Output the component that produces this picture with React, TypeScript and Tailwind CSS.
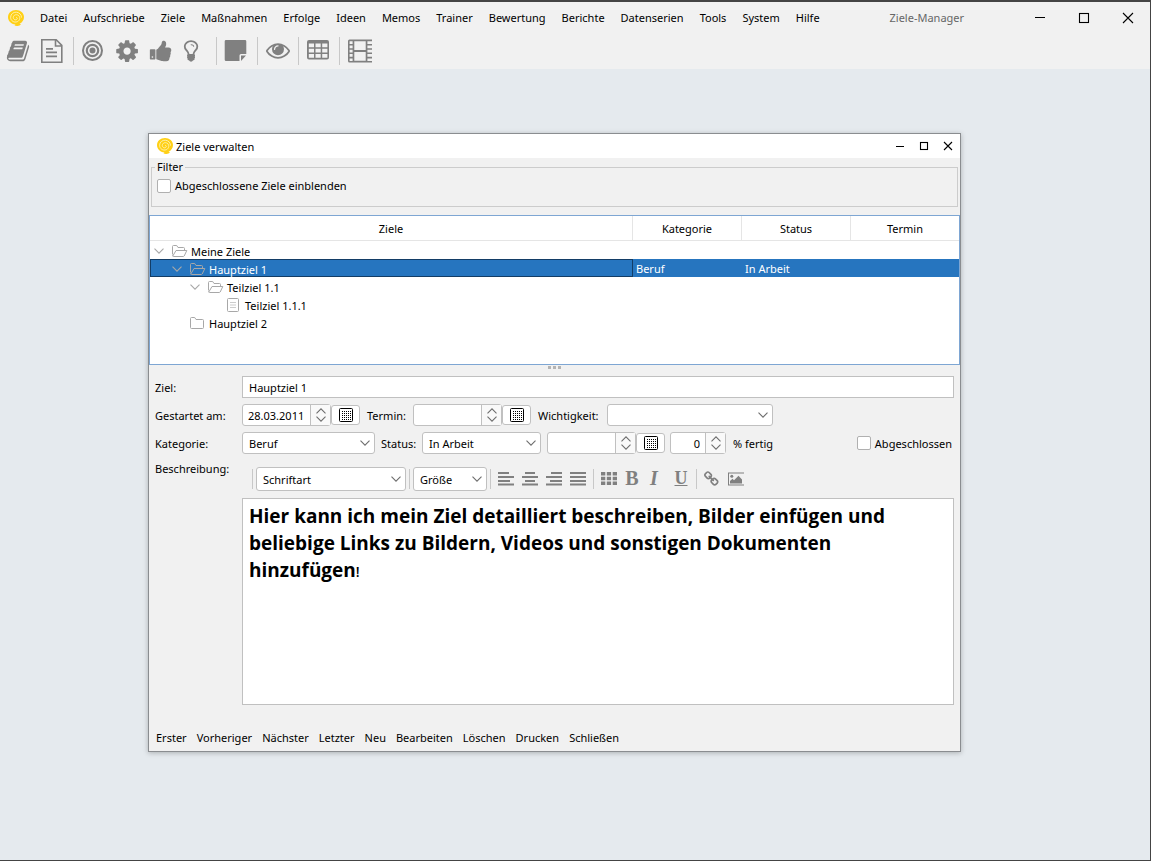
import { useState } from 'react';
import type { ReactNode } from 'react';
import { clsx } from 'clsx';

const menus = ['Datei', 'Aufschriebe', 'Ziele', 'Maßnahmen', 'Erfolge', 'Ideen', 'Memos', 'Trainer', 'Bewertung', 'Berichte', 'Datenserien', 'Tools', 'System', 'Hilfe'];
const actions = ['Erster', 'Vorheriger', 'Nächster', 'Letzter', 'Neu', 'Bearbeiten', 'Löschen', 'Drucken', 'Schließen'];

const goals = [
    { id: 1, name: 'Meine Ziele', indent: 'pl-[3px]', icon: 'open', expandable: true, category: '', status: '' },
    { id: 2, name: 'Hauptziel 1', indent: 'pl-[21px]', icon: 'open', expandable: true, category: 'Beruf', status: 'In Arbeit' },
    { id: 3, name: 'Teilziel 1.1', indent: 'pl-[39px]', icon: 'open', expandable: true, category: '', status: '' },
    { id: 4, name: 'Teilziel 1.1.1', indent: 'pl-[57px]', icon: 'leaf', expandable: false, category: '', status: '' },
    { id: 5, name: 'Hauptziel 2', indent: 'pl-[21px]', icon: 'closed', expandable: false, category: '', status: '' },
];

const Logo = () => (
    <svg viewBox="0 0 16 16" className="size-4">
        <path d="M8 0c4.500 0 8 3 8 7 0 3-1.800 5.600-4.500 6.800l1.500.4-1.500 1.300c-1.500.8-4 .6-5-.2l1-.8C3 14 0 11 0 7.300 0 3 3.500 0 8 0z" fill="#ffd016" />
        <path d="M8 7.800c.8-.8 1.800.3 1 1.300C7.800 10.600 5.300 9.600 5.300 7.500c0-2.400 2.800-3.600 4.800-2.300 2.600 1.600 2 5.300-.8 6.500-3.200 1.300-6.700-.9-6.700-4.400C2.600 4 5.500 2 8.300 2.200c3 .2 5.200 2.500 5.200 5.400" fill="none" stroke="#fff3b8" strokeWidth=".9" />
    </svg>
);

const Glyph = ({ children, viewBox = '0 0 24 24' }: { children: ReactNode; viewBox?: string }) => (
    <svg viewBox={viewBox} className="size-6 fill-[#808080]">{children}</svg>
);

const BookIcon = () => (
    <Glyph viewBox="0 0 1792 1792">
        <path d="M1703 478q40 57 18 129l-275 906q-19 64-76.500 107.500t-122.500 43.500h-923q-77 0-148.500-53.500t-99.500-131.500q-24-67-2-127 0-4 3-27t4-37q1-8-3-21.500t-3-19.500q2-11 8-21t16.500-23.500 16.500-23.500q23-38 45-91.500t30-91.500q3-10 .5-30t-.5-28q3-11 17-28t17-23q21-36 42-92t25-90q1-9-2.500-32t.5-28q4-13 22-30.500t22-22.500q19-26 42.500-84.500t27.500-96.500q1-8-3-25.500t-2-26.500q2-8 9-18t18-23 17-21q8-12 16.500-30.500t15-35 16-36 19.500-32 26.500-23.500 36-11.500 47.500 5.500l-1 3q38-9 51-9h761q74 0 114 56t18 130l-274 906q-36 119-71.500 153.500t-128.500 34.500h-869q-27 0-38 15-11 16-1 43 24 70 144 70h923q29 0 56-15.500t35-41.500l300-987q7-22 5-57 38 15 59 43zm-1064 2q-4 13 2 22.500t20 9.500h608q13 0 25.500-9.500t16.500-22.500l21-64q4-13-2-22.500t-20-9.500h-608q-13 0-25.500 9.500t-16.500 22.500zm-83 256q-4 13 2 22.500t20 9.500h608q13 0 25.500-9.500t16.500-22.500l21-64q4-13-2-22.500t-20-9.500h-608q-13 0-25.500 9.500t-16.500 22.500z" />
    </Glyph>
);

const NoteTextIcon = () => (
    <Glyph>
        <path d="M1.800.8h14.400l5.600 5.600v16.800h-20zM15.500 1v6h6" fill="none" stroke="#808080" strokeWidth="1.600" />
        <path d="M6 9h7v1.800H6zM6 12.500h11v1.800H6zM6 16.500h11v1.800H6z" />
    </Glyph>
);

const TargetIcon = () => (
    <Glyph>
        <circle cx="11.500" cy="11.500" r="9.500" fill="none" stroke="#808080" strokeWidth="2" />
        <circle cx="11.500" cy="11.500" r="5.700" fill="none" stroke="#808080" strokeWidth="2.200" />
        <circle cx="11.500" cy="11.500" r="3" />
    </Glyph>
);

const CogIcon = () => (
    <Glyph viewBox="40 40 1700 1700">
        <path d="M1152 896q0-106-75-181t-181-75-181 75-75 181 75 181 181 75 181-75 75-181zm512-109v222q0 12-8 23t-20 13l-185 28q-19 54-39 91 35 50 107 138 10 12 10 25t-9 23q-27 37-99 108t-94 71q-12 0-26-9l-138-108q-44 23-91 38-16 136-29 186-7 28-36 28h-222q-14 0-24.500-8.500t-11.500-21.500l-28-184q-49-16-90-37l-141 107q-10 9-25 9-14 0-25-11-126-114-165-168-7-10-7-23 0-12 8-23 15-21 51-66.500t54-70.500q-27-50-41-99l-183-27q-13-2-21-12.500t-8-23.500v-222q0-12 8-23t19-13l186-28q14-46 39-92-40-57-107-138-10-12-10-24 0-10 9-23 26-36 98.500-107.500t94.500-71.500q13 0 26 10l138 107q44-23 91-38 16-136 29-186 7-28 36-28h222q14 0 24.500 8.500t11.500 21.500l28 184q49 16 90 37l142-107q9-9 24-9 13 0 25 10 129 119 165 170 7 8 7 22 0 12-8 23-15 21-51 66.500t-54 70.500q26 50 41 98l183 28q13 2 21 12.500t8 23.500z" />
    </Glyph>
);

const ThumbIcon = () => (
    <Glyph viewBox="0 0 1792 1792">
        <path d="M320 1344q0-26-19-45t-45-19q-27 0-45.500 19t-18.500 45q0 27 18.500 45.500t45.500 18.500q26 0 45-18.500t19-45.500zm160-512v640q0 26-19 45t-45 19h-288q-26 0-45-19t-19-45v-640q0-26 19-45t45-19h288q26 0 45 19t19 45zm1184 0q0 86-55 149 15 44 15 76 3 76-43 137 17 56 0 117-15 57-54 94 9 112-49 181-64 76-197 78h-129q-66 0-144-15.500t-121.500-29-120.500-39.500q-123-43-158-44-26-1-45-19.500t-19-44.500v-641q0-25 18-43.500t43-20.500q24-2 76-59t101-121q68-87 101-120 18-18 31-48t17.500-48.500 13.500-60.500q7-39 12.500-61t19.500-52 34-50q19-19 45-19 46 0 82.500 10.500t60 26 40 40.500 24 45 12 50 5 45 .5 39q0 38-9.500 76t-19 60-27.500 56q-3 6-10 18t-11 22-8 24h277q78 0 135 57t57 135z" />
    </Glyph>
);

const BulbIcon = () => (
    <Glyph viewBox="320 40 1720 1720">
        <path d="M1120 576q0 13-9.500 22.500t-22.500 9.500-22.500-9.500-9.500-22.500q0-46-54-71t-106-25q-13 0-22.500-9.500t-9.500-22.500 9.500-22.500 22.500-9.500q50 0 99.500 16t87 54 37.500 90zm160 0q0-72-34.500-134t-90-101.500-123-62-136.500-22.500-136.500 22.500-123 62-90 101.500-34.500 134q0 101 68 180 10 11 30.500 33t30.500 33q128 153 141 298h228q13-145 141-298 10-11 30.500-33t30.500-33q68-79 68-180zm128 0q0 155-103 268-45 49-74.500 87t-59.500 95.500-34 107.500q47 28 47 82 0 37-25 64 25 27 25 64 0 52-45 81 13 23 13 47 0 46-31.500 71t-77.500 25q-20 44-60 70t-87 26-87-26-60-70q-46 0-77.500-25t-31.500-71q0-24 13-47-45-29-45-81 0-37 25-64-25-27-25-64 0-54 47-82-4-50-34-107.500t-59.500-95.500-74.500-87q-103-113-103-268 0-99 44.500-184.500t117-142 164-89 186.500-32.500 186.500 32.500 164 89 117 142 44.500 184.500z" />
    </Glyph>
);

const StickyIcon = () => (
    <Glyph>
        <path d="M2 1h19a1.300 1.300 0 0 1 1.300 1.300V15H17a1.500 1.500 0 0 0-1.500 1.500V22H2a1.300 1.300 0 0 1-1.300-1.300V2.300A1.300 1.300 0 0 1 2 1zM17 16.500h5L17 22z" />
    </Glyph>
);

const EyeIcon = () => (
    <Glyph viewBox="0 64 1792 1792">
        <path d="M1664 960q-152-236-381-353 61 104 61 225 0 185-131.500 316.500t-316.500 131.500-316.500-131.500-131.500-316.500q0-121 61-225-229 117-381 353 133 205 333.500 326.500t434.500 121.500 434.500-121.500 333.500-326.500zm-720-384q0-20-14-34t-34-14q-125 0-214.500 89.500t-89.500 214.500q0 20 14 34t34 14 34-14 14-34q0-86 61-147t147-61q20 0 34-14t14-34zm848 384q0 34-20 69-140 230-376.500 368.500t-499.500 138.500-499.500-139-376.500-368q-20-35-20-69t20-69q140-229 376.500-368t499.500-139 499.500 139 376.500 368q20 35 20 69z" />
    </Glyph>
);

const TableIcon = () => (
    <Glyph>
        <path fillRule="evenodd" d="M2 1h18a2 2 0 0 1 2 2v15.500a2 2 0 0 1-2 2H2a2 2 0 0 1-2-2V3a2 2 0 0 1 2-2zM1.800 4.500v3.700h5.200V4.500zM8.500 4.500v3.700h5.200V4.500zM15.200 4.500v3.700h5.200V4.500zM1.800 9.800v3.700h5.200V9.800zM8.500 9.800v3.700h5.200V9.800zM15.200 9.800v3.700h5.200V9.800zM1.800 15.100v3.700h5.200v-3.700zM8.500 15.100v3.700h5.200v-3.700zM15.200 15.100v3.700h5.200v-3.700z" />
    </Glyph>
);

const FilmIcon = () => (
    <Glyph>
        <path fillRule="evenodd" d="M1.500.5H24v23H1.500A1.500 1.500 0 0 1 0 22V2A1.500 1.500 0 0 1 1.500.5zM6.300 2.200v8.800h11.400V2.200zM6.300 12.900v8.800h11.400v-8.800zM1.600 2.200v2.700h3V2.200zM1.600 6.500v2.700h3V6.500zM1.600 10.800v2.700h3v-2.700zM1.600 15.100v2.700h3v-2.700zM1.600 19.400V22h3v-2.600zM19.400 2.200v2.700H24V2.200zM19.400 6.500v2.700H24V6.500zM19.400 10.800v2.700H24v-2.700zM19.400 15.100v2.700H24v-2.700zM19.400 19.400V22H24v-2.600z" />
    </Glyph>
);

const toolGroups = [
    { pad: 'pl-1.5 pr-[9px]', tools: [{ label: 'Aufschriebe', icon: BookIcon }, { label: 'Notizen', icon: NoteTextIcon }] },
    { pad: 'border-l pl-[7px] pr-[9px]', tools: [{ label: 'Ziele', icon: TargetIcon }, { label: 'Maßnahmen', icon: CogIcon }, { label: 'Erfolge', icon: ThumbIcon }, { label: 'Ideen', icon: BulbIcon }] },
    { pad: 'border-l pl-[7px] pr-[9px]', tools: [{ label: 'Memos', icon: StickyIcon }] },
    { pad: 'border-l px-2', tools: [{ label: 'Ansicht', icon: EyeIcon }] },
    { pad: 'border-l px-2', tools: [{ label: 'Tabelle', icon: TableIcon }] },
    { pad: 'border-l px-2', tools: [{ label: 'Filme', icon: FilmIcon }] },
];

const Chevron = ({ className }: { className?: string }) => (
    <svg viewBox="0 0 10 6" className={clsx('h-1.5 w-2.5', className)}>
        <path d="M.5.700 5 5.200 9.500.700" fill="none" stroke="currentColor" strokeWidth="1.100" />
    </svg>
);

const NodeIcon = ({ kind }: { kind: string }) => (
    <svg viewBox="0 0 16 14" className="h-3.5 w-4 shrink-0" fill="none" stroke="#a8a8a8">
        {kind === 'open' && <path d="M.5 10.500v-8q0-1 1-1h3.200l1.300 2h5.500q1 0 1 1v1.500M.8 12 4 6.500h10.800l-2.600 5.500q-.3.500-1 .5H1.500q-1 0-1-1" />}
        {kind === 'closed' && <path d="M.5 11.500v-9q0-1 1-1h3.200l1.300 2h6.500q1 0 1 1v7q0 1-1 1h-11q-1 0-1-1z" />}
        {kind === 'leaf' && (
            <>
                <rect x="1.500" y=".5" width="11" height="13" rx="1" />
                <path d="M4 4.500h6M4 7h6M4 9.500h6" stroke="#cccccc" />
            </>
        )}
    </svg>
);

const WindowButtons = ({ small }: { small?: boolean }) => (
    <div className={clsx('flex items-center', small ? 'gap-3 pr-1.5' : 'gap-8 pr-4')}>
        <button aria-label="Minimieren">
            <svg viewBox="0 0 12 12" className="size-3"><path d={small ? 'M2 6.500h8' : 'M1 5.500h10'} stroke="#000" /></svg>
        </button>
        <button aria-label="Maximieren">
            <svg viewBox="0 0 12 12" className="size-3">
                <rect x={small ? 2.5 : 1.5} y={small ? 2.5 : 1.5} width={small ? 7 : 9} height={small ? 7 : 9} fill="none" stroke="#000" strokeWidth="1.100" />
            </svg>
        </button>
        <button aria-label="Schließen">
            <svg viewBox="0 0 12 12" className="size-3">
                <path d={small ? 'm2 2 8 8M10 2l-8 8' : 'm1 1 10 10M11 1 1 11'} stroke="#000" strokeWidth="1.100" />
            </svg>
        </button>
    </div>
);

const Select = ({ label, options, className, height = 'h-[22px]' }: { label: string; options: string[]; className: string; height?: string }) => (
    <div className={clsx('relative text-black', className)}>
        <select aria-label={label} className={clsx('w-full appearance-none rounded-[3px] border border-[#c0c0c0] bg-white pt-px pr-5 pl-1.5 leading-4', height)}>
            {options.map((option) => <option key={option}>{option}</option>)}
        </select>
        <Chevron className="pointer-events-none absolute top-1/2 right-[5px] -translate-y-1/2 text-[#6e6e6e]" />
    </div>
);

const Spinner = ({ label, value, inputClass }: { label: string; value: string; inputClass: string }) => (
    <div className="flex h-[22px] rounded-[3px] border border-[#c0c0c0] bg-white">
        <input aria-label={label} defaultValue={value} className={clsx('bg-transparent px-[5px] pt-px outline-none', inputClass)} />
        <div className="flex w-5 flex-col items-center justify-center gap-0.5 border-l border-[#c0c0c0] bg-[#f9f9f9] text-[#6e6e6e]">
            <button aria-label={`${label} erhöhen`}><Chevron className="rotate-180" /></button>
            <button aria-label={`${label} verringern`}><Chevron /></button>
        </div>
    </div>
);

const CalendarButton = () => (
    <button aria-label="Kalender" className="flex h-5 w-[29px] items-center justify-center rounded-[3px] border border-[#c0c0c0] bg-white">
        <svg viewBox="0 0 14 14" className="size-3.5">
            <rect x=".5" y=".5" width="13" height="13" rx="1" fill="none" stroke="#000" />
            <path d="M3 3.500h9M3 5.500h9M3 7.500h9M3 9.500h9M3 11.500h9" stroke="#000" strokeDasharray="1 1" />
        </svg>
    </button>
);

const Separator = () => <div className="h-5 w-px bg-[#c8c8c8]" />;

const Lines = ({ d }: { d: string }) => (
    <svg viewBox="0 0 16 16" className="size-4"><path d={d} stroke="#808080" strokeWidth="2" /></svg>
);

const alignments = [
    { label: 'Linksbündig', d: 'M0 2h11M0 6h16M0 10h12M0 13.500h16' },
    { label: 'Zentriert', d: 'M3 2h10M0 6h16M3 10h10M0 13.500h16' },
    { label: 'Rechtsbündig', d: 'M5 2h11M0 6h16M4 10h12M0 13.500h16' },
    { label: 'Blocksatz', d: 'M0 2h16M0 6h16M0 10h16M0 13.500h16' },
];

const Checkbox = ({ label }: { label: string }) => (
    <label className="flex items-center gap-1">
        <input type="checkbox" className="size-3.5 appearance-none rounded-[2px] border border-[#b0b0b0] bg-white checked:bg-[#2675bf]" />
        <span className="pt-px">{label}</span>
    </label>
);

const GoalTable = () => {
    const [selected, setSelected] = useState(2);

    return (
        <div className="mt-2 min-h-[150px] border border-[#7ea6d3] bg-white">
            <table className="w-full table-fixed border-separate border-spacing-0">
                <thead>
                    <tr className="h-[25px]">
                        <th className="border-r border-b border-[#e5e5e5] p-0 pt-0.5 font-normal">Ziele</th>
                        <th className="w-[109px] border-r border-b border-[#e5e5e5] p-0 pt-0.5 font-normal">Kategorie</th>
                        <th className="w-[109px] border-r border-b border-[#e5e5e5] p-0 pt-0.5 font-normal">Status</th>
                        <th className="w-[108px] border-b border-[#e5e5e5] p-0 pt-0.5 font-normal">Termin</th>
                    </tr>
                </thead>
                <tbody>
                    {goals.map((goal) => {
                        const active = goal.id === selected;
                        return (
                            <tr key={goal.id} onClick={() => setSelected(goal.id)} className={clsx('h-[18px]', active && 'bg-[#2675bf] text-white')}>
                                <td className={clsx('border p-0', active ? 'border-[#133d66]' : 'border-transparent')}>
                                    <div className={clsx('flex h-4 items-center pt-0.5', goal.indent)}>
                                        {goal.expandable && <Chevron className="mr-2 text-[#a8a8a8]" />}
                                        {!goal.expandable && <span className="w-[18px]" />}
                                        <NodeIcon kind={goal.icon} />
                                        <span className="ml-[3px] pt-px">{goal.name}</span>
                                    </div>
                                </td>
                                <td className="px-[3px] pt-0.5 pb-0">{goal.category}</td>
                                <td className="px-[3px] pt-0.5 pb-0">{goal.status}</td>
                                <td className="p-0" />
                            </tr>
                        );
                    })}
                </tbody>
            </table>
        </div>
    );
};

const EditorToolbar = () => (
    <div className="flex items-center pl-2.5 text-[#808080]">
        <Separator />
        <Select label="Schriftart" options={['Schriftart']} className="mx-[3px] w-[150px]" height="h-6" />
        <Separator />
        <Select label="Größe" options={['Größe']} className="mx-[3px] w-[74px]" height="h-6" />
        <Separator />
        <div className="mx-[7px] flex gap-2">
            {alignments.map((item) => (
                <button key={item.label} aria-label={item.label}><Lines d={item.d} /></button>
            ))}
        </div>
        <Separator />
        <div className="mx-[7px] flex items-center gap-2">
            <button aria-label="Tabelle einfügen">
                <svg viewBox="0 0 16 16" className="size-4 fill-[#808080]">
                    <path d="M0 1h4.300v3.500H0zM5.800 1h4.300v3.500H5.800zM11.700 1H16v3.500h-4.300zM0 5.700h4.300v3.500H0zM5.800 5.700h4.300v3.500H5.800zM11.700 5.700H16v3.500h-4.300zM0 10.400h4.300v3.500H0zM5.800 10.400h4.300v3.500H5.800zM11.700 10.400H16v3.500h-4.300z" />
                </svg>
            </button>
            <button className="w-3.5 pb-0.5 font-['Liberation_Serif',serif] text-[20px] leading-5 font-bold">B</button>
            <button className="w-3.5 pb-0.5 font-['Liberation_Serif',serif] text-[20px] leading-5 font-bold italic">I</button>
            <button className="ml-1 w-4 pb-0.5 font-['Liberation_Serif',serif] text-[18px] leading-5 font-bold underline">U</button>
        </div>
        <Separator />
        <div className="mx-[7px] flex items-center gap-2">
            <button aria-label="Link einfügen">
                <svg viewBox="64 0 1700 1792" className="size-4 fill-[#808080]">
                    <path d="M1456 1216q0-40-28-68l-208-208q-28-28-68-28-42 0-72 32 3 3 19 18.500t21.500 21.500 15 19 13 25.500 3.500 27.500q0 40-28 68t-68 28q-15 0-27.500-3.500t-25.500-13-19-15-21.500-21.500-18.500-19q-33 31-33 73 0 40 28 68l206 207q27 27 68 27 40 0 68-26l147-146q28-28 28-67zm-703-705q0-40-28-68l-206-207q-28-28-68-28-39 0-68 27l-147 146q-28 28-28 67 0 40 28 68l208 208q27 27 68 27 42 0 72-31-3-3-19-18.500t-21.500-21.500-15-19-13-25.500-3.500-27.500q0-40 28-68t68-28q15 0 27.500 3.500t25.500 13 19 15 21.500 21.500 18.500 19q33-31 33-73zm895 705q0 120-85 203l-147 146q-83 83-203 83-121 0-204-85l-206-207q-83-83-83-203 0-123 88-209l-88-88q-86 88-208 88-120 0-204-84l-208-208q-84-84-84-204t85-203l147-146q83-83 203-83 121 0 204 85l206 207q83 83 83 203 0 123-88 209l88 88q86-88 208-88 120 0 204 84l208 208q84 84 84 204z" />
                </svg>
            </button>
            <button aria-label="Bild einfügen">
                <svg viewBox="0 0 16 16" className="size-4 fill-[#808080]">
                    <path fillRule="evenodd" d="M0 1.500h16v13H0zM1 2.500v11h15v-11z" />
                    <circle cx="3.800" cy="5.300" r="1.500" />
                    <path d="M2 12.500V10l2.500-2.200L6 9.300l4.500-4.500 3.500 3.700v4z" />
                </svg>
            </button>
        </div>
    </div>
);

const GoalWindow = () => (
    <section className="mt-16 mr-[189px] ml-[148px] border border-[#8a8d90] bg-[#f1f1f1] shadow-[0_1px_5px_rgba(0,0,0,0.25)]">
        <header className="flex h-6 items-center justify-between bg-white pl-2">
            <div className="flex items-center gap-[3px]">
                <Logo />
                <h2 className="pt-0.5">Ziele verwalten</h2>
            </div>
            <WindowButtons small />
        </header>

        <fieldset className="mx-0.5 h-[49px] border border-[#cccccc] px-[5px]">
            <legend className="-ml-0.5 px-0.5 leading-[18px]">Filter</legend>
            <div className="pt-px">
                <Checkbox label="Abgeschlossene Ziele einblenden" />
            </div>
        </fieldset>

        <GoalTable />

        <div className="flex h-[11px] justify-center gap-0.5 pt-px">
            <span className="size-[3px] bg-[#b4b4b4]" />
            <span className="size-[3px] bg-[#b4b4b4]" />
            <span className="size-[3px] bg-[#b4b4b4]" />
        </div>

        <div className="grid grid-cols-[87px_1fr] gap-y-1.5 px-1.5">
            <label htmlFor="goal" className="pt-1">Ziel:</label>
            <input id="goal" defaultValue="Hauptziel 1" className="h-[22px] border border-[#c0c0c0] bg-white px-1.5 pt-px outline-none" />

            <span className="pt-1">Gestartet am:</span>
            <div className="flex items-center">
                <Spinner label="Gestartet am" value="28.03.2011" inputClass="w-[67px]" />
                <CalendarButton />
                <span className="ml-[7px] w-[46px] pt-px">Termin:</span>
                <Spinner label="Termin" value="" inputClass="w-[67px]" />
                <CalendarButton />
                <span className="ml-[7px] w-[69px] pt-px">Wichtigkeit:</span>
                <Select label="Wichtigkeit" options={['']} className="w-[166px]" />
            </div>

            <span className="pt-1">Kategorie:</span>
            <div className="flex items-center">
                <Select label="Kategorie" options={['Beruf']} className="mr-1.5 w-[133px]" />
                <span className="w-[41px] pt-px">Status:</span>
                <Select label="Status" options={['In Arbeit']} className="mr-1.5 w-[119px]" />
                <Spinner label="Abschlussdatum" value="" inputClass="w-[67px]" />
                <CalendarButton />
                <div className="ml-[5px]"><Spinner label="Prozent fertig" value="0" inputClass="w-[34px] text-right" /></div>
                <span className="ml-[7px] pt-px">% fertig</span>
                <div className="mr-0.5 ml-auto"><Checkbox label="Abgeschlossen" /></div>
            </div>

            <span className="pt-px">Beschreibung:</span>
            <div className="pt-[7px]">
                <EditorToolbar />
                <div
                    contentEditable
                    suppressContentEditableWarning
                    role="textbox"
                    aria-label="Beschreibung"
                    className="mt-[7px] h-[207px] border border-[#c0c0c0] bg-white py-1 pr-6 pl-1.5 font-['Open_Sans',sans-serif] text-[19px] leading-[27px] outline-none"
                >
                    <b>Hier kann ich mein Ziel detailliert beschreiben, Bilder einfügen und beliebige Links zu Bildern, Videos und sonstigen Dokumenten hinzufügen</b>
                    <span className="text-[14px] leading-4 font-semibold">!</span>
                </div>
            </div>
        </div>

        <footer className="flex gap-2.5 px-[7px] pt-6 pb-[5px]">
            {actions.map((action) => (
                <button key={action} className="leading-[17px]">{action}</button>
            ))}
        </footer>
    </section>
);

export default function App() {
    return (
        <div className="min-h-screen border-t-2 border-r border-b border-[#444444] bg-[#e5eaee] font-['Noto_Sans','Open_Sans',sans-serif] text-[11px] leading-4 text-black">
            <div className="bg-[#f1f1f1]">
                <header className="flex h-[31px] items-center pl-2">
                    <Logo />
                    <nav className="ml-4 flex gap-4 pt-px">
                        {menus.map((menu) => <button key={menu}>{menu}</button>)}
                    </nav>
                    <h1 className="flex-1 pt-px text-center text-[#666666]">Ziele-Manager</h1>
                    <WindowButtons />
                </header>
                <div className="flex h-9 items-center">
                    {toolGroups.map((group, i) => (
                        <div key={i} className={clsx('flex h-7 items-center gap-2.5 border-[#c8c8c8]', group.pad)}>
                            {group.tools.map((tool) => (
                                <button key={tool.label} aria-label={tool.label}><tool.icon /></button>
                            ))}
                        </div>
                    ))}
                </div>
            </div>
            <GoalWindow />
        </div>
    );
}
